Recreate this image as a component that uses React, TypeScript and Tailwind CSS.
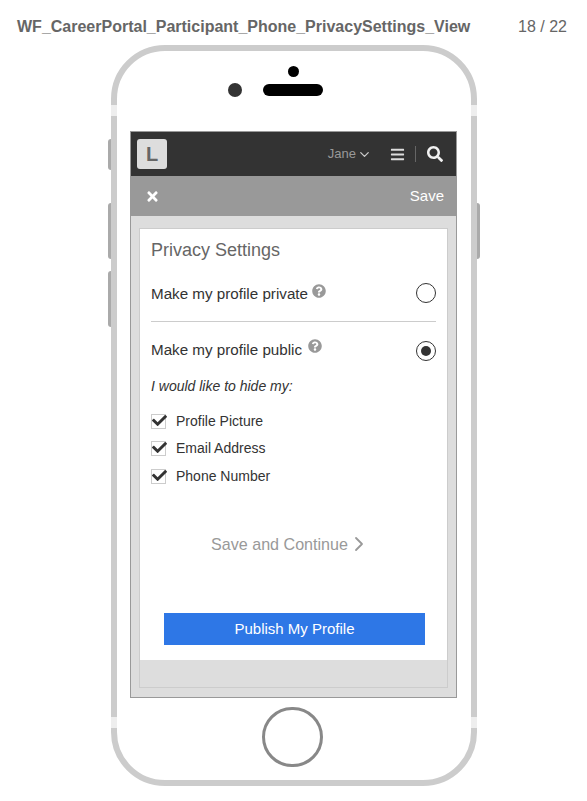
import { ChevronDown, ChevronRight } from "lucide-react";
import { FaBars, FaCheck, FaQuestionCircle, FaSearch, FaTimes } from "react-icons/fa";

const hideOptions = ["Profile Picture", "Email Address", "Phone Number"];

function Radio({ checked }: { checked?: boolean }) {
  return (
    <span className="grid h-[20px] w-[20px] shrink-0 place-items-center rounded-full border border-[#333] bg-white">
      {checked ? <span className="h-[10px] w-[10px] rounded-full bg-[#333]" /> : null}
    </span>
  );
}

export default function App() {
  return (
    <div className="h-[801px] w-[587px] overflow-hidden bg-white font-['Liberation_Sans',Arial,sans-serif]">
      <div className="flex h-[45px] items-start justify-between pl-[17px] pr-[20px] pt-[18px] text-[#666]">
        <span className="text-[16px] font-bold leading-[18px]">WF_CareerPortal_Participant_Phone_PrivacySettings_View</span>
        <span className="text-[16px] leading-[18px]">18 / 22</span>
      </div>

      <div className="relative ml-[111px] h-[741px] w-[366px] rounded-[54px] border-[6px] border-[#ccc] bg-white">
        {/* side buttons and antenna bands */}
        <span className="absolute left-[-9px] top-[88px] h-[31px] w-[3px] rounded-l-sm bg-[#aaa]" />
        <span className="absolute left-[-9px] top-[152px] h-[56px] w-[3px] rounded-l-sm bg-[#aaa]" />
        <span className="absolute left-[-9px] top-[220px] h-[56px] w-[3px] rounded-l-sm bg-[#aaa]" />
        <span className="absolute right-[-9px] top-[152px] h-[56px] w-[3px] rounded-r-sm bg-[#aaa]" />
        <span className="absolute left-[-6px] top-[54px] h-[11px] w-[6px] bg-[#eee]" />
        <span className="absolute right-[-6px] top-[54px] h-[11px] w-[6px] bg-[#eee]" />
        <span className="absolute left-[-6px] top-[666px] h-[11px] w-[6px] bg-[#eee]" />
        <span className="absolute right-[-6px] top-[666px] h-[11px] w-[6px] bg-[#eee]" />

        <div className="flex h-[80px] flex-col items-center pr-[2px]">
          <span className="mt-[15px] h-[11px] w-[11px] rounded-full bg-black" />
          <div className="relative mt-[7px] h-[12px] w-[60px] rounded-full bg-black">
            <span className="absolute left-[-35px] top-[-1px] h-[14px] w-[14px] rounded-full bg-[#333]" />
          </div>
        </div>

        <div className="ml-[13px] flex h-[567px] w-[327px] flex-col border border-[#999] bg-[#ddd]">
          <div className="flex h-[44px] items-center bg-[#333] pl-[6px] pr-[13px]">
            <div className="grid h-[30px] w-[30px] place-items-center rounded-[3px] bg-[#ddd] text-[20px] font-bold text-[#666]">L</div>
            <span className="ml-auto text-[13px] text-[#999]">Jane</span>
            <ChevronDown className="ml-[1px] text-[#ccc]" size={15} strokeWidth={2} />
            <FaBars className="ml-[18px] text-[#ddd]" size={15} />
            <span className="ml-[10px] mr-[11px] h-[16px] w-px bg-[#666]" />
            <FaSearch className="text-[#f2f2f2]" size={16} />
          </div>
          <div className="flex h-[40px] items-center justify-between bg-[#999] pl-[14px] pr-[12px] text-white">
            <FaTimes size={15} />
            <span className="text-[15px]">Save</span>
          </div>

          <div className="mx-[8px] mb-[9px] mt-[12px] flex flex-1 flex-col border border-[#ccc]">
            <div className="flex h-[431px] flex-col bg-white px-[11px]">
              <h1 className="mt-[11px] text-[18px] leading-[21px] text-[#666]">Privacy Settings</h1>
              <div className="mt-[12px] flex h-[40px] items-center justify-between">
                <div className="flex items-center">
                  <span className="pt-[2px] text-[15.2px] text-[#333]">Make my profile private</span>
                  <FaQuestionCircle className="mb-[4px] ml-[4px] text-[#999]" size={14} />
                </div>
                <Radio />
              </div>
              <div className="mt-[8px] h-px bg-[#ccc]" />
              <div className="mt-[9px] flex h-[40px] items-center justify-between">
                <div className="flex items-center">
                  <span className="pb-[2px] text-[15.2px] text-[#333]">Make my profile public</span>
                  <FaQuestionCircle className="mb-[10px] ml-[6px] text-[#999]" size={14} />
                </div>
                <Radio checked />
              </div>
              <p className="mt-[7px] text-[14px] italic leading-[16px] text-[#333]">I would like to hide my:</p>
              <div className="mt-[20px] flex flex-col gap-[13.5px]">
                {hideOptions.map((label) => (
                  <label key={label} className="flex h-[14px] items-center">
                    <span className="relative h-[15px] w-[15px] border border-[#ccc] bg-white">
                      <FaCheck className="absolute left-[0px] top-[-2px] text-[#333]" size={15} />
                    </span>
                    <span className="ml-[10px] text-[14px] text-[#333]">{label}</span>
                  </label>
                ))}
              </div>
              <div className="mt-[49px] flex items-center justify-center pr-[5px] text-[#999]">
                <span className="text-[16.1px]">Save and Continue</span>
                <ChevronRight className="ml-[-1px]" size={24} strokeWidth={1.8} />
              </div>
              <button className="ml-[13px] mr-[11px] mt-[57px] h-[32px] bg-[#2e77e6] text-[15px] text-white">Publish My Profile</button>
            </div>
          </div>
        </div>

        <div className="mt-[9px] flex justify-center pr-[3px]">
          <span className="h-[60px] w-[61px] rounded-full border-[3px] border-[#888] bg-white" />
        </div>
      </div>
    </div>
  );
}
